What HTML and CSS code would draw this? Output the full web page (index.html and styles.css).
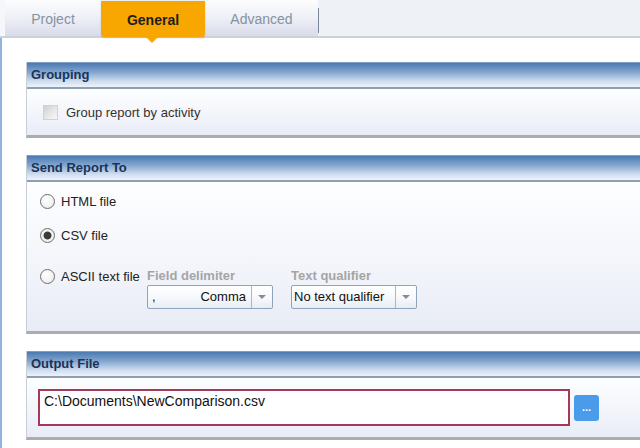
FILE: index.html
```html
<!DOCTYPE html>
<html>
<head>
<meta charset="utf-8">
<link rel="stylesheet" href="styles.css">
</head>
<body>
<div class="tabbar">
  <div class="tab tab-project">Project</div>
  <div class="tab tab-active">General</div>
  <div class="tab tab-advanced">Advanced</div>
  <div class="tab-sep"></div>
</div>
<div class="content">
  <section class="panel">
    <div class="panel-head">Grouping</div>
    <div class="panel-body body-grouping">
      <label class="check-row"><span class="checkbox"></span><span>Group report by activity</span></label>
    </div>
  </section>

  <section class="panel">
    <div class="panel-head">Send Report To</div>
    <div class="panel-body body-send">
      <div class="radio-row"><span class="radio"></span><span>HTML file</span></div>
      <div class="radio-row row-csv"><span class="radio radio-on"></span><span>CSV file</span></div>
      <div class="ascii-row">
        <div class="radio-row radio-fixed"><span class="radio"></span><span>ASCII text file</span></div>
        <div class="field">
          <div class="field-label">Field delimiter</div>
          <div class="select">
            <div class="select-value split"><span>,</span><span>Comma</span></div>
            <div class="select-btn"><span class="caret"></span></div>
          </div>
        </div>
        <div class="field">
          <div class="field-label">Text qualifier</div>
          <div class="select">
            <div class="select-value">No text qualifier</div>
            <div class="select-btn"><span class="caret"></span></div>
          </div>
        </div>
      </div>
    </div>
  </section>

  <section class="panel">
    <div class="panel-head">Output File</div>
    <div class="panel-body body-output">
      <div class="path-input">C:\Documents\NewComparison.csv</div>
      <div class="browse-btn">...</div>
    </div>
  </section>
</div>
</body>
</html>
```

FILE: styles.css
```css
html, body {
  margin: 0;
  padding: 0;
  background: #ffffff;
  font-family: "Liberation Sans", Arial, sans-serif;
  font-size: 13px;
  color: #222;
  overflow: hidden;
  height: 448px;
}

.tabbar {
  display: flex;
  height: 36px;
  background: #eef2f6;
  border-bottom: 2px solid #cdd0d5;
  padding-left: 5px;
  box-shadow: inset 5px 0 0 #f6f7fa;
}

.tab {
  display: flex;
  align-items: center;
  justify-content: center;
  box-sizing: border-box;
  height: 36px;
  padding-top: 2px;
  font-size: 14px;
  color: #8592a2;
  background: linear-gradient(to bottom, #fdfdfe 0%, #eef0f6 50%, #d8dbea 100%);
}

.tab-project { width: 96px; }
.tab-advanced { width: 113px; }

.tab-active {
  width: 104px;
  align-self: flex-start;
  margin-top: 1px;
  padding-top: 1px;
  height: 36px;
  background: #f8a700;
  color: #1e1e1e;
  font-weight: bold;
  border-radius: 0 0 3px 3px;
  position: relative;
  box-shadow: 0 1px 2px rgba(0,0,0,0.15);
  z-index: 2;
}

.tab-active::after {
  content: "";
  position: absolute;
  left: 45px;
  bottom: -6px;
  border-left: 6px solid transparent;
  border-right: 6px solid transparent;
  border-top: 6px solid #f8a700;
}

.tab-sep {
  width: 1px;
  height: 25px;
  margin-top: 8px;
  background: #7b8796;
}

.content {
  border-left: 2px solid #8eb3df;
  padding: 24px 0 0 24px;
  height: 400px;
}

.panel {
  border-left: 1px solid #c9ced6;
  border-bottom: 3px solid #acacac;
  margin-bottom: 17px;
}

.panel-head {
  height: 24px;
  line-height: 24px;
  padding-left: 4px;
  font-weight: bold;
  font-size: 13px;
  color: #1a3357;
  border-top: 1px solid #7e9ec4;
  border-bottom: 2px solid #8c9fb3;
  background: linear-gradient(to bottom, #4a7ab2 0%, #86a8d0 40%, #cfdcee 75%, #eef3fa 100%);
}

.panel-body {
  background: linear-gradient(to bottom, #fdfeff 0%, #f4f6fb 50%, #e8ecf6 100%);
}

.body-grouping {
  height: 46px;
  padding-left: 16px;
  display: flex;
  align-items: center;
}

.check-row {
  display: flex;
  align-items: center;
  gap: 8px;
  color: #333;
}

.checkbox {
  width: 13px;
  height: 13px;
  border: 1px solid #d2d2d2;
  background: linear-gradient(135deg, #cfcfcf 0%, #e6e6e6 50%, #f7f7f7 100%);
}

.body-send {
  height: 140px;
  padding: 9px 0 0 13px;
}

.radio-row {
  display: flex;
  align-items: center;
  height: 20px;
  gap: 6px;
  color: #222;
}

.row-csv { margin-top: 14px; }

.radio {
  width: 13px;
  height: 13px;
  border: 1px solid #6f6f6f;
  border-radius: 50%;
  background: radial-gradient(circle at 40% 35%, #ffffff 0%, #f2f2f2 60%, #dcdcdc 100%);
  flex: none;
}

.radio-on {
  background: radial-gradient(circle, #3a3a3a 0%, #3a3a3a 38%, #f4f4f4 48%, #e6e6e6 100%);
}

.ascii-row {
  display: flex;
  align-items: flex-start;
  margin-top: 21px;
}

.radio-fixed { width: 107px; }

.field {
  width: 126px;
  margin-right: 18px;
}

.field-label {
  height: 18px;
  line-height: 18px;
  margin-top: 1px;
  font-weight: bold;
  font-size: 13px;
  color: #a5a5a5;
}

.select {
  display: flex;
  height: 22px;
  border: 1px solid #8fa4bd;
  border-radius: 2px;
  background: linear-gradient(to bottom, #ffffff 0%, #f6f8fb 55%, #e7ecf4 100%);
}

.select-value {
  flex: 1;
  line-height: 22px;
  padding-left: 2px;
  font-size: 13px;
  color: #111;
  white-space: nowrap;
  overflow: hidden;
}

.select-value.split {
  display: flex;
  justify-content: space-between;
  padding: 0 5px 0 4px;
}

.select-btn {
  width: 20px;
  border-left: 1px solid #a8b6c7;
  display: flex;
  align-items: center;
  justify-content: center;
}

.caret {
  width: 0;
  height: 0;
  border-left: 4px solid transparent;
  border-right: 4px solid transparent;
  border-top: 4px solid #8a8a8a;
}

.body-output {
  display: flex;
  align-items: center;
  gap: 4px;
  padding: 11px 0 11px 11px;
}

.path-input {
  width: 520px;
  height: 32px;
  border: 2px solid #a33a5b;
  background: #ffffff;
  padding: 1px 4px 0;
  line-height: 18px;
  font-size: 14px;
  color: #111;
}

.browse-btn {
  width: 25px;
  height: 26px;
  border-radius: 3px;
  background: #4a9ceb;
  color: #ffffff;
  font-size: 11px;
  font-weight: bold;
  text-align: center;
  line-height: 24px;
}
```
